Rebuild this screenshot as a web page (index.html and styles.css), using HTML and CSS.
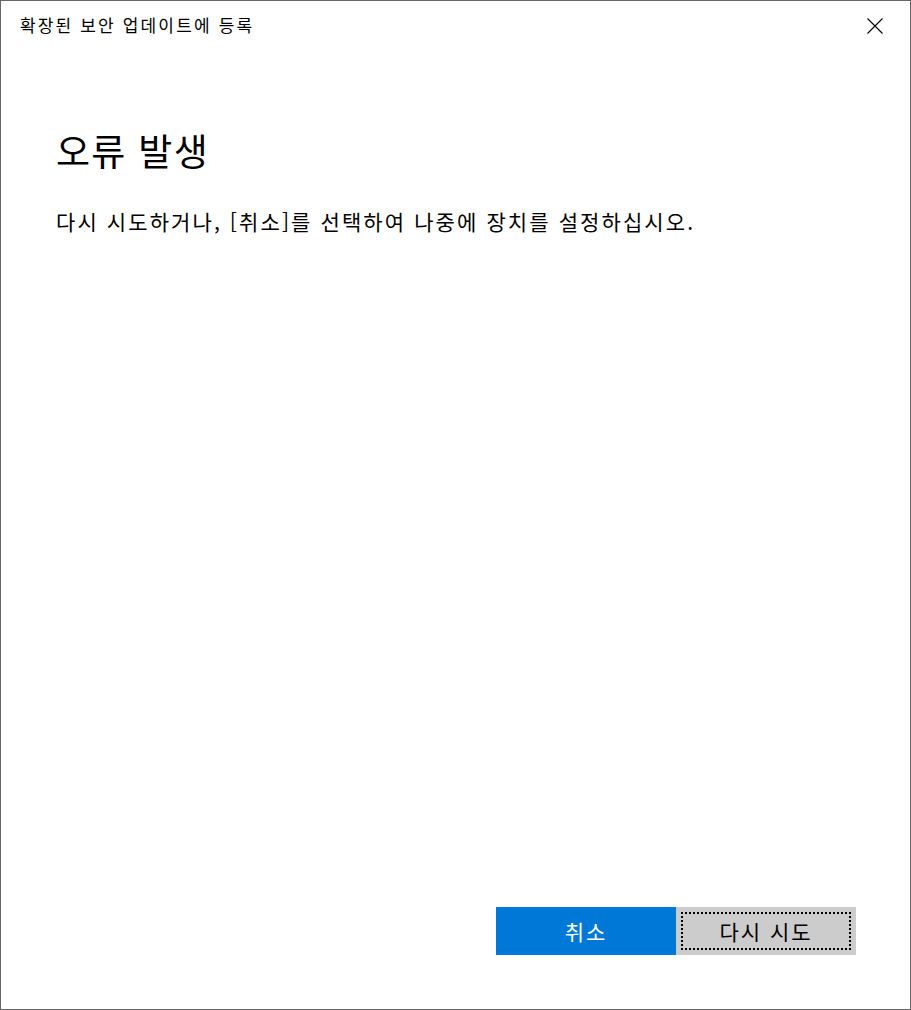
FILE: index.html
```html
<!DOCTYPE html>
<html lang="ko">
<head>
<meta charset="utf-8">
<link rel="stylesheet" href="styles.css">
</head>
<body>
<div class="window">
  <div class="titlebar">
    <span class="title">확장된 보안 업데이트에 등록</span>
    <span class="close">
      <svg width="16" height="16" viewBox="0 0 16 16"><path d="M0.5 0.5 L15.5 15.5 M15.5 0.5 L0.5 15.5" stroke="#000" stroke-width="1.1" fill="none"/></svg>
    </span>
  </div>
  <div class="content">
    <h1 class="heading">오류 발생</h1>
    <p class="message">다시 시도하거나, [취소]를 선택하여 나중에 장치를 설정하십시오.</p>
  </div>
  <div class="footer">
    <button class="btn primary">취소</button>
    <button class="btn secondary"><span class="focus">다시 시도</span></button>
  </div>
</div>
</body>
</html>
```

FILE: styles.css
```css
* { box-sizing: border-box; }
html, body { margin: 0; padding: 0; background: #fff; }
body { font-family: "Noto Sans CJK KR", "Noto Sans", sans-serif; color: #000; }
.window {
  width: 911px;
  height: 1010px;
  border: 1px solid #666;
  display: flex;
  flex-direction: column;
  background: #fff;
}
.titlebar {
  height: 50px;
  display: flex;
  align-items: flex-start;
  justify-content: space-between;
  padding: 11px 27px 0 19px;
}
.title { font-size: 17px; line-height: 26px; letter-spacing: 2.15px; }
.close { display: flex; padding-top: 6px; }
.content { flex: 1; padding: 70px 55px 0 55px; }
.heading { margin: 0; font-weight: 400; font-size: 37px; line-height: 58px; letter-spacing: 1.3px; }
.message { margin: 26px 0 0 0; font-size: 21px; line-height: 32px; letter-spacing: 2.1px; }
.footer {
  display: flex;
  justify-content: flex-end;
  padding: 0 54px 54px 0;
}
.btn {
  width: 180px;
  height: 48px;
  border: none;
  margin: 0;
  padding: 0;
  font-family: inherit;
  font-size: 21px;
  letter-spacing: 2px;
}
.primary { background: #0078d7; color: #fff; }
.secondary { background: #cccccc; color: #000; padding: 5px; }
.focus {
  display: flex;
  align-items: center;
  justify-content: center;
  width: 100%;
  height: 100%;
  border: 2px dotted #000;
}
```
